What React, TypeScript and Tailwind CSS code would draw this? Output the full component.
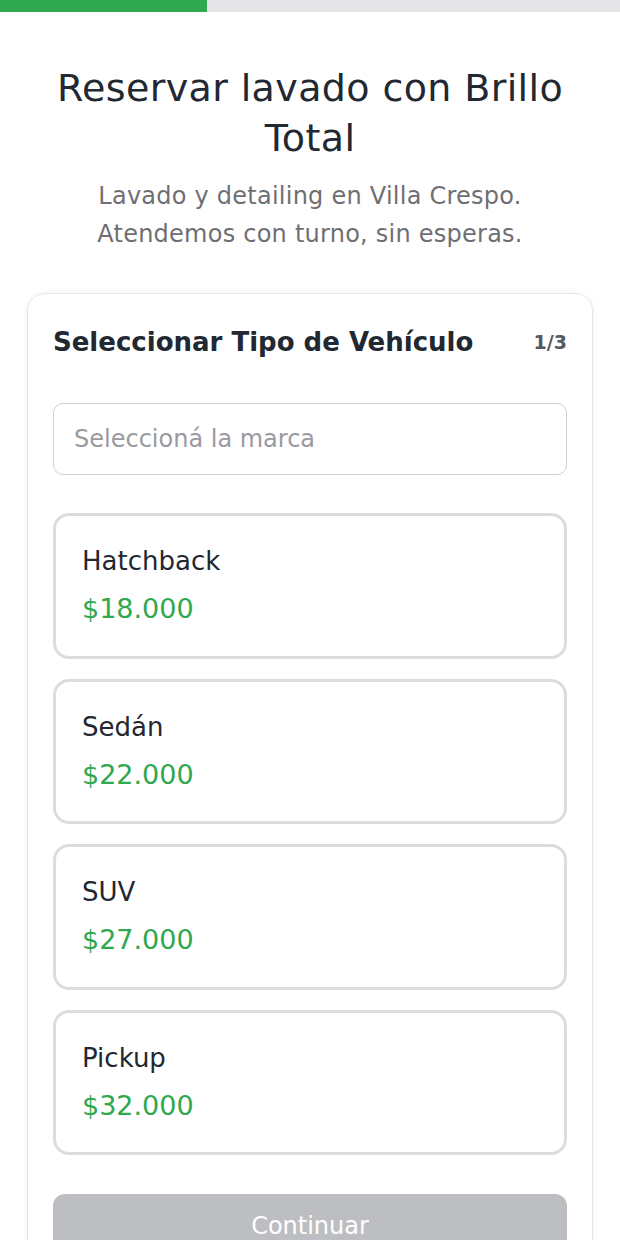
export default function App() {
  const options = [
    { name: "Hatchback", price: "$18.000" },
    { name: "Sedán", price: "$22.000" },
    { name: "SUV", price: "$27.000" },
    { name: "Pickup", price: "$32.000" },
  ];

  return (
    <div className="min-h-screen bg-white font-['DejaVu_Sans',sans-serif]">
      <div className="h-3 w-full bg-[#e5e5e7]">
        <div className="h-3 w-1/3 bg-[#2fa84f]" />
      </div>

      <main className="px-[27px]">
        <h1 className="mt-[51px] px-2 text-center text-[38px] leading-[50px] font-normal tracking-[0.01em] text-[#222831]">
          Reservar lavado con Brillo Total
        </h1>
        <p className="mt-[14px] px-10 text-center text-[24px] leading-[38px] tracking-[0.01em] text-[#6f6f73]">
          Lavado y detailing en Villa Crespo. Atendemos con turno, sin esperas.
        </p>

        <section className="mt-10 rounded-[18px] border border-[#e6e6e6] px-[25px] pt-8 pb-10 shadow-[0_1px_6px_rgba(0,0,0,0.06)]">
          <div className="flex items-center justify-between">
            <h2 className="text-[26px] leading-8 font-bold text-[#222831]">
              Seleccionar Tipo de Vehículo
            </h2>
            <span className="text-[19px] font-semibold text-[#55585e]">1/3</span>
          </div>

          <input
            placeholder="Seleccioná la marca"
            className="mt-[45px] h-[72px] w-full rounded-[10px] border border-[#cfcfd2] px-5 text-[24px] text-[#222831] placeholder:text-[#9a9aa0] outline-none"
          />

          <div className="mt-[38px] flex flex-col gap-5">
            {options.map((o) => (
              <div
                key={o.name}
                className="h-[145.5px] cursor-pointer rounded-[16px] border-[3px] border-[#dcdcdc] px-[26px] pt-[29px]"
              >
                <div className="text-[26px] leading-8 text-[#222831]">{o.name}</div>
                <div className="mt-4 text-[27px] leading-8 text-[#2fa84f]">{o.price}</div>
              </div>
            ))}
          </div>

          <button className="mt-[39px] h-16 w-full rounded-[12px] bg-[#bdbec1] text-[24px] text-white">
            Continuar
          </button>
        </section>
      </main>
    </div>
  );
}
